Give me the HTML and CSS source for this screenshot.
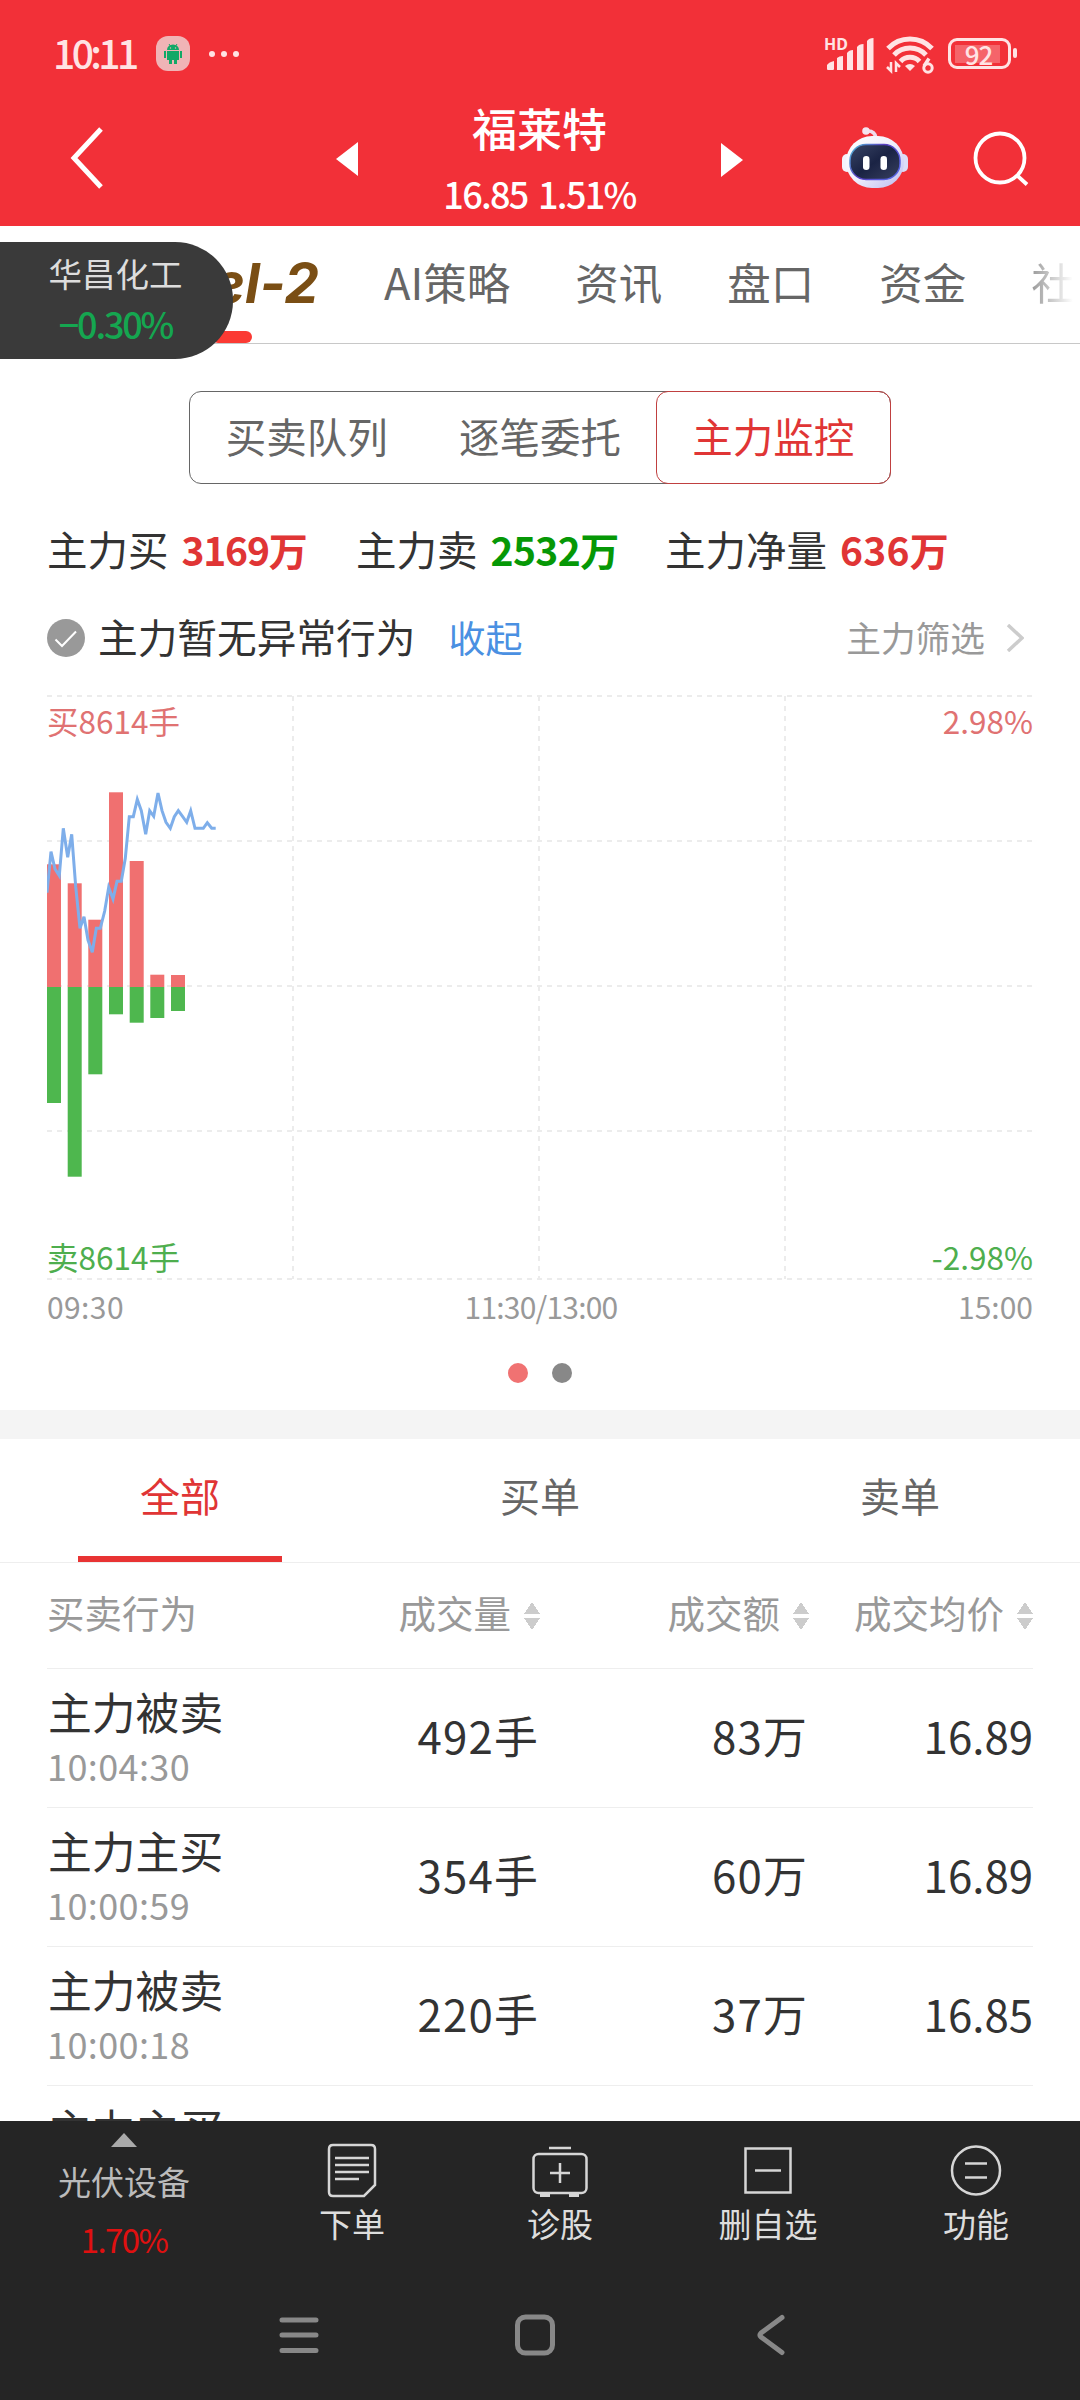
FILE: index.html
```html
<!DOCTYPE html>
<html lang="zh-CN">
<head>
  <meta charset="UTF-8">
  <meta name="viewport" content="width=device-width, initial-scale=1.0">
  <title>福莱特 主力监控</title>
  <link rel="stylesheet" href="styles.css">
</head>

<body>
  <div id="wrap">
    <!-- 顶部 -->
    <header class="top">
      <div class="status">
        <span class="time">10:11</span>
        <svg class="app" width="34" height="35" viewBox="0 0 34 35">
          <rect width="34" height="35" rx="12" fill="#f0b4b6"/>
          <path d="M11 14a6 5.5 0 0 1 12 0z" fill="#12a866"/>
          <path d="M13 8l2 3M21 8l-2 3" stroke="#12a866" stroke-width="1"/>
          <path d="M11 15h12v9h-2v4h-3v-4h-2v4h-3v-4h-2zM8 15h2v7H8zM24 15h2v7h-2z" fill="#12a866"/>
          <circle cx="14.500" cy="12" r=".7" fill="#f0b4b6"/>
          <circle cx="19.500" cy="12" r=".7" fill="#f0b4b6"/>
        </svg>
        <svg class="more" width="32" height="8" viewBox="0 0 32 8" fill="#ffe3e4">
          <circle cx="4" cy="4" r="3"/><circle cx="16" cy="4" r="3"/><circle cx="28" cy="4" r="3"/>
        </svg>
        <div class="signal">
          <span>HD</span>
          <svg width="50" height="34" viewBox="0 0 50 34" fill="#ffe3e4">
            <path d="M3 32v-4q2-3 7-4v8q0 1-1 1H4q-1 0-1-1zM13 33V21q2-2 6-2v14zM23 33V16q2-3 6-3v20zM33 33V10q2-3 6.500-3v26zM43 33V4q2-3 6.500-3v32z"/>
          </svg>
        </div>
        <svg class="wifi" width="50" height="38" viewBox="0 0 50 38" fill="none" stroke="#ffe3e4" stroke-width="5">
          <path d="M2 12.500a30 30 0 0 1 44 0"/>
          <path d="M8 19a22 22 0 0 1 32 0"/>
          <path d="M14.500 25.500a13 13 0 0 1 19 0"/>
          <path d="M24 35l-5-5q5-4 10 0z" fill="#ffe3e4" stroke="none"/>
          <path d="M5 26v9l-4-4M10 36v-9l4 4" stroke-width="2.500"/>
          <path d="M43 22.500l-5 7.500" stroke-width="3.500"/>
          <circle cx="42" cy="32" r="4.200" stroke-width="3"/>
        </svg>
        <div class="battery"><span>92</span></div>
      </div>

      <div class="bar">
        <svg class="back" width="34" height="62" viewBox="0 0 34 62" fill="none" stroke="#fff" stroke-width="5">
          <path d="M31 2L4 31l27 29"/>
        </svg>
        <svg class="prev" width="22" height="34" viewBox="0 0 22 34"><path d="M22 0v34L0 17z" fill="#fff"/></svg>
        <div class="stock">
          <h1>福莱特</h1>
          <p>16.85 1.51%</p>
        </div>
        <svg class="next" width="22" height="34" viewBox="0 0 22 34"><path d="M0 0v34l22-17z" fill="#fff"/></svg>
        <svg class="robot" width="66" height="62" viewBox="0 0 66 62">
          <defs>
            <linearGradient id="shell" x1="0" y1="0" x2="1" y2="1">
              <stop offset="0" stop-color="#fff"/><stop offset=".5" stop-color="#f0effc"/><stop offset="1" stop-color="#b9b9ee"/>
            </linearGradient>
            <linearGradient id="rim" x1="0" y1="0" x2="1" y2=".6">
              <stop offset="0" stop-color="#4fc0d8"/><stop offset=".5" stop-color="#5a3ec0"/><stop offset="1" stop-color="#5560e0"/>
            </linearGradient>
            <linearGradient id="glass" x1="0" y1="0" x2="1" y2="1">
              <stop offset="0" stop-color="#3a4566"/><stop offset=".5" stop-color="#1a2344"/><stop offset="1" stop-color="#38405f"/>
            </linearGradient>
          </defs>
          <path d="M24 5q9-1 10 7" fill="none" stroke="#f0dcec" stroke-width="3.500"/>
          <circle cx="24" cy="5" r="3.800" fill="#f5e4f0"/>
          <rect x="0" y="28" width="10" height="18" rx="5" fill="#f4f2fc"/>
          <rect x="56" y="28" width="10" height="18" rx="5" fill="#dcdcf6"/>
          <rect x="4" y="10" width="58" height="52" rx="26" fill="url(#shell)"/>
          <rect x="8" y="18.500" width="50" height="35" rx="16" fill="url(#glass)" stroke="url(#rim)" stroke-width="1.500"/>
          <rect x="21" y="30" width="6.500" height="14" rx="3.200" fill="#fff"/>
          <rect x="38.500" y="30" width="6.500" height="14" rx="3.200" fill="#fff"/>
        </svg>
        <svg class="search" width="56" height="56" viewBox="0 0 56 56" fill="none" stroke="#fff" stroke-width="3.800">
          <circle cx="27" cy="27" r="24.500"/><path d="M43.500 44l10.500 9.500"/>
        </svg>
      </div>
    </header>

    <!-- 悬浮股票 -->
    <div class="float">
      <p>华昌化工</p>
      <b>−0.30%</b>
    </div>

    <main>
      <nav class="menu">
        <span class="level on">el-2</span>
        <span>AI策略</span>
        <span>资讯</span>
        <span>盘口</span>
        <span>资金</span>
        <span class="fade">社</span>
      </nav>

      <div class="seg">
        <span>买卖队列</span>
        <span>逐笔委托</span>
        <span class="on">主力监控</span>
      </div>

      <ul class="sum">
        <li>主力买<b class="red">3169万</b></li>
        <li>主力卖<b class="green">2532万</b></li>
        <li>主力净量<b class="red">636万</b></li>
      </ul>

      <div class="notice">
        <svg width="38" height="38" viewBox="0 0 38 38">
          <circle cx="19" cy="19" r="19" fill="#999"/>
          <path d="M8.500 20.500l6.500 6.500 14-14.500" fill="none" stroke="#fff" stroke-width="2"/>
        </svg>
        <span>主力暂无异常行为</span>
        <a>收起</a>
        <em>主力筛选</em>
        <svg class="arrow" width="18" height="28" viewBox="0 0 18 28" fill="none" stroke="#ccc" stroke-width="3.500">
          <path d="M2 1l14 13L2 27"/>
        </svg>
      </div>

      <!-- 分时图 -->
      <div class="chart">
        <svg width="986" height="595" viewBox="0 0 986 595">
          <g stroke="#ececec" stroke-width="2" stroke-dasharray="5 5" fill="none">
            <path d="M0 6H986M0 151H986M0 296H986M0 441H986M0 589H986"/>
            <path d="M246 6V589M492 6V589M738 6V589"/>
          </g>
          <!-- 买 -->
          <g fill="#f07070">
            <rect x="0" y="174.300" width="14" height="122.700"/>
            <rect x="20.700" y="193.300" width="14" height="103.700"/>
            <rect x="41.300" y="229.700" width="14" height="67.300"/>
            <rect x="62" y="102.300" width="14" height="194.700"/>
            <rect x="82.700" y="171" width="14" height="126"/>
            <rect x="103.300" y="284.700" width="14" height="12.300"/>
            <rect x="124" y="285" width="14" height="12"/>
          </g>
          <!-- 卖 -->
          <g fill="#4eb74e">
            <rect x="0" y="297" width="14" height="116"/>
            <rect x="20.700" y="297" width="14" height="189.700"/>
            <rect x="41.300" y="297" width="14" height="87.300"/>
            <rect x="62" y="297" width="14" height="27.300"/>
            <rect x="82.700" y="297" width="14" height="35.700"/>
            <rect x="103.300" y="297" width="14" height="31"/>
            <rect x="124" y="297" width="14" height="24"/>
          </g>
          <polyline fill="none" stroke="#7eaeea" stroke-width="3" points="0,202.700 4,161.700 8,179 12.300,185.700 16.300,138.300 20.700,167.300 24.700,144.300 28.700,196.700 33,238.300 37,226.700 41,250 45.300,262.300 49.300,238.300 53.300,238.300 57.700,221 61.700,197.300 66,209 70,191.300 74.300,191.300 78.300,168.300 82.300,126.700 86.300,126.700 90.300,109.300 94.300,120.700 98.700,144.300 102.700,120.700 106.700,126.300 111,103 115,120.700 119,132.300 123.300,138.300 127.300,126.700 131.300,120.700 135.700,126.700 139.700,132.300 143.700,120.700 148,138.300 156.300,138.300 160.300,132.700 164.700,138.300 168.700,138.300"/>
        </svg>
        <div class="mark">
          <p class="up"><span>买8614手</span><span>2.98%</span></p>
          <p class="down"><span>卖8614手</span><span>-2.98%</span></p>
        </div>
      </div>
      <div class="axis"><span>09:30</span><span>11:30/13:00</span><span>15:00</span></div>
      <div class="dots"><i class="on"></i><i></i></div>

      <!-- 成交明细 -->
      <div class="tabs">
        <span class="on">全部</span>
        <span>买单</span>
        <span>卖单</span>
      </div>

      <div class="list">
        <div class="row head">
          <span>买卖行为</span>
          <span>成交量<i></i></span>
          <span>成交额<i></i></span>
          <span>成交均价<i></i></span>
        </div>
        <div class="row">
          <div><p>主力被卖</p><small>10:04:30</small></div>
          <span class="num">492手</span>
          <span class="num">83万</span>
          <span>16.89</span>
        </div>
        <div class="row">
          <div><p>主力主买</p><small>10:00:59</small></div>
          <span class="num">354手</span>
          <span class="num">60万</span>
          <span>16.89</span>
        </div>
        <div class="row">
          <div><p>主力被卖</p><small>10:00:18</small></div>
          <span class="num">220手</span>
          <span class="num">37万</span>
          <span>16.85</span>
        </div>
        <div class="row">
          <div><p>主力主买</p></div>
        </div>
      </div>
    </main>

    <!-- 底部 -->
    <footer>
      <div class="tools">
        <div class="sector">
          <svg width="26" height="14" viewBox="0 0 26 14"><path d="M13 0l13 14H0z" fill="#aaa"/></svg>
          <p>光伏设备</p>
          <b>1.70%</b>
        </div>
        <div>
          <svg width="60" height="56" viewBox="0 0 60 56" fill="none" stroke="#d6d6d6" stroke-width="2.500">
            <path d="M11 2h38q4 0 4 4v36L42 53H11q-4 0-4-4V6q0-4 4-4z"/>
            <path d="M13 15h34M13 22h34M13 29h34M13 36h24"/>
          </svg>
          <p>下单</p>
        </div>
        <div>
          <svg width="60" height="56" viewBox="0 0 60 56" fill="none" stroke="#d6d6d6" stroke-width="2.500">
            <rect x="3.500" y="11" width="53" height="39" rx="5"/>
            <path d="M19 5h22M30 20v20M20 30h20"/>
            <path d="M10 52h10M39 52h10" stroke-width="4"/>
          </svg>
          <p>诊股</p>
        </div>
        <div>
          <svg width="60" height="56" viewBox="0 0 60 56" fill="none" stroke="#d6d6d6" stroke-width="2.500">
            <rect x="7.500" y="5.500" width="45" height="44"/>
            <path d="M17 27.500h26"/>
          </svg>
          <p>删自选</p>
        </div>
        <div>
          <svg width="60" height="56" viewBox="0 0 60 56" fill="none" stroke="#d6d6d6" stroke-width="2.500">
            <circle cx="30" cy="27.500" r="24"/>
            <path d="M19 20.500h22M19 34.500h22"/>
          </svg>
          <p>功能</p>
        </div>
      </div>
      <div class="keys">
        <svg width="40" height="44" viewBox="0 0 40 44" stroke="#888" stroke-width="5" stroke-linecap="round">
          <path d="M3 7h34M3 22h34M3 37.500h34"/>
        </svg>
        <svg width="40" height="44" viewBox="0 0 40 44" fill="none" stroke="#888" stroke-width="5">
          <rect x="2.500" y="4" width="35" height="36" rx="8"/>
        </svg>
        <svg width="40" height="44" viewBox="0 0 40 44" fill="none" stroke="#888" stroke-width="5" stroke-linecap="round" stroke-linejoin="round">
          <path d="M31 4.500L10 20q-2 2 0 4l21 15.500"/>
        </svg>
      </div>
    </footer>
  </div>
</body>
</html>
```
FILE: styles.css
```css
html, body{
  margin: 0;
  padding: 0;
}
body{
  font-family: "Noto Sans CJK SC", sans-serif;
  color: #333;
  background-color: #fff;
}
ul, p, h1{
  margin: 0;
  padding: 0;
  list-style: none;
  font-weight: normal;
}
svg{
  display: block;
  flex-shrink: 0;
}
b, i, em{
  font-weight: normal;
  font-style: normal;
}

/* 全体 */
#wrap{
  position: relative;
  display: flex;
  flex-direction: column;
  width: 1080px;
  height: 2400px;
  overflow: hidden;
}

/* 顶部 */
.top{
  height: 226px;
  flex-shrink: 0;
  background-color: #f23038;
  color: #fff;
}
.status{
  display: flex;
  align-items: center;
  height: 107px;
  padding-left: 53px;
  color: #ffe3e4;
}
.time{
  width: 103px;
  font-size: 39px;
  font-weight: 500;
  line-height: 100px;
  margin-top: -4px;
  letter-spacing: -3.6px;
}
.more{
  margin-left: 18px;
}
.signal{
  position: relative;
  margin-left: 584px;
  margin-top: 1px;
}
.signal span{
  position: absolute;
  left: 0;
  top: -2px;
  font: bold 16px/18px "Noto Sans", sans-serif;
}
.wifi{
  margin-left: 12px;
  margin-top: 3px;
}
.battery{
  position: relative;
  box-sizing: border-box;
  width: 63px;
  height: 31px;
  margin-left: 12px;
  padding: 4px;
  border: 3px solid #ffe3e4;
  border-radius: 9px;
}
.battery span{
  display: block;
  width: 45px;
  height: 18px;
  padding-left: 2px;
  box-sizing: border-box;
  text-align: center;
  font: 500 26px/18px "Noto Sans CJK SC", sans-serif;
  letter-spacing: -1px;
  background-color: rgba(255,255,255,.25);
}
.battery::after{
  content: "";
  position: absolute;
  right: -9px;
  top: 7px;
  width: 4px;
  height: 10px;
  border-radius: 2px;
  background-color: #ffe3e4;
}

/* 标题栏 */
.bar{
  display: flex;
  align-items: flex-start;
  height: 119px;
  padding-left: 70px;
}
.back{
  margin-top: 20px;
}
.prev{
  margin: 35px 0 0 232px;
}
.next{
  margin-top: 36px;
}
.stock{
  width: 363px;
  text-align: center;
}
.stock h1{
  font-size: 45px;
  font-weight: 500;
  line-height: 60px;
  margin-top: -9px;
}
.stock p{
  font-size: 36px;
  font-weight: 500;
  line-height: 50px;
  margin-top: 10px;
  letter-spacing: -1.7px;
  word-spacing: 4px;
}
.robot{
  margin: 19px 0 0 99px;
}
.search{
  margin: 24px 0 0 65px;
}

/* 悬浮标签 */
.float{
  position: absolute;
  left: 0;
  top: 242px;
  z-index: 2;
  box-sizing: border-box;
  width: 233px;
  height: 117px;
  padding-right: 2px;
  border-radius: 0 58px 58px 0;
  background-color: #3a3a3a;
  color: #ddd;
  font-size: 33.5px;
  line-height: 50px;
  text-align: center;
}
.float p{
  padding-top: 6px;
}
.float b{
  color: #15a650;
  font-size: 36px;
  font-weight: 500;
  letter-spacing: -2.2px;
}

/* 内容 */
main{
  height: 1895px;
  overflow: hidden;
}
.menu{
  display: flex;
  gap: 65px;
  height: 117px;
  border-bottom: 1px solid #c8c8c8;
  font-size: 43.5px;
  line-height: 112px;
  color: #666;
}
.menu span{
  flex-shrink: 0;
}
.level{
  position: relative;
  width: 319px;
  text-align: right;
  font: italic 700 55px/115px Inter, sans-serif;
  color: #7a4e14;
}
.level::after{
  content: "";
  position: absolute;
  left: 212px;
  bottom: 0;
  width: 40px;
  height: 12px;
  border-radius: 6px;
  background-color: #fb3a33;
}
.fade{
  background: linear-gradient(90deg, #999, #fff 95%);
  -webkit-background-clip: text;
  background-clip: text;
  color: transparent;
}

/* 分段按钮 */
.seg{
  display: flex;
  box-sizing: border-box;
  width: 702px;
  height: 93px;
  margin: 47px auto 0;
  border: 1px solid #666;
  border-radius: 12px;
  font-size: 40.500px;
  line-height: 87px;
  color: #666;
}
.seg span{
  flex: 1;
  text-align: center;
}
.seg .on{
  margin: -1px;
  border: 1px solid #c04040;
  border-radius: 12px;
  color: #e03535;
}

/* 汇总 */
.sum{
  display: grid;
  grid-template-columns: 309px 309px auto;
  padding-left: 47px;
  margin-top: 35px;
  font-size: 40.5px;
  line-height: 60px;
}
.sum b{
  margin-left: 13px;
  font-size: 39px;
  font-weight: bold;
  letter-spacing: -.6px;
}
.sum li:first-child b{
  letter-spacing: -1.2px;
}
.sum li:last-child b{
  letter-spacing: .2px;
}
.red{
  color: #e03535;
}
.green{
  color: #069806;
}

/* 提示 */
.notice{
  display: flex;
  align-items: center;
  height: 60px;
  margin: 29px 47px 0;
}
.notice span{
  margin-left: 13px;
  font-size: 39.7px;
  line-height: 54px;
  margin-top: -4px;
}
.notice a{
  margin: -3px auto 0 33px;
  font-size: 37px;
  color: #4a90e2;
}
.notice em{
  font-size: 34.7px;
  color: #999;
  margin-top: -2px;
}
.notice .arrow{
  margin: 0 9px 0 21px;
}

/* 图表 */
.chart{
  position: relative;
  margin: 22px 47px 0;
  height: 595px;
}
.mark{
  position: absolute;
  left: 0;
  right: 0;
  top: 10px;
  bottom: 9px;
  display: flex;
  flex-direction: column;
  justify-content: space-between;
  font-size: 31.5px;
  line-height: 40px;
}
.mark p{
  display: flex;
  justify-content: space-between;
}
.up{
  color: #e07272;
}
.down{
  color: #4eae4e;
}
.axis{
  display: flex;
  justify-content: space-between;
  margin: 0 47px;
  font-size: 30px;
  line-height: 42px;
  color: #999;
}
.axis span:first-child{
  letter-spacing: .4px;
}
.axis span:nth-child(2){
  letter-spacing: -.8px;
}
.dots{
  display: flex;
  justify-content: center;
  gap: 24px;
  padding: 36px 0 27px;
}
.dots i{
  width: 20px;
  height: 20px;
  border-radius: 50%;
  background-color: #888;
}
.dots .on{
  background-color: #f07272;
}

/* 明细标签 */
.tabs{
  display: flex;
  height: 123px;
  border-top: 29px solid #f4f4f4;
  border-bottom: 1px solid #eee;
  font-size: 40px;
  line-height: 112px;
  color: #666;
}
.tabs span{
  flex: 1;
  text-align: center;
}
.tabs .on{
  box-sizing: border-box;
  height: 123px;
  flex: 0 0 204px;
  margin: 0 78px;
  border-bottom: 6px solid #e83333;
  color: #e03535;
}

/* 列表 */
.list{
  padding: 0 47px;
}
.row{
  display: grid;
  grid-template-columns: 200px 293px 269px 224px;
  box-sizing: border-box;
  height: 139px;
  border-bottom: 1px solid #eee;
  font-size: 43.8px;
  line-height: 132px;
}
.row p{
  margin-left: 1px;
  line-height: 54px;
  padding-top: 15px;
}
.row small{
  display: block;
  font-size: 36px;
  line-height: 44px;
  padding-top: 5px;
  letter-spacing: .4px;
  color: #999;
}
.row>span{
  text-align: right;
}
.row>.num{
  letter-spacing: 1.2px;
  margin-right: 1px;
}
.head{
  height: 106px;
  font-size: 37.5px;
  line-height: 98px;
  color: #999;
}
.head>span{
  display: flex;
  justify-content: flex-end;
}
.head>span:first-child{
  justify-content: flex-start;
}
/* 排序箭头 */
.head i{
  width: 16px;
  height: 28px;
  margin: 39px 0 0 13px;
  background:
    conic-gradient(from 146deg at 50% 0, #ccc 68deg, transparent 0) top / 16px 12px no-repeat,
    conic-gradient(from -34deg at 50% 100%, #ccc 68deg, transparent 0) bottom / 16px 12px no-repeat;
}

/* 底部 */
footer{
  height: 279px;
  background-color: #252525;
}
.tools{
  display: flex;
  height: 164px;
}
.tools div{
  display: flex;
  flex-direction: column;
  align-items: center;
  width: 208px;
  padding-top: 22px;
  box-sizing: border-box;
  font-size: 33px;
  line-height: 48px;
  color: #ddd;
}
.tools .sector{
  width: 248px;
  padding-top: 12px;
  color: #bbb;
}
.tools .sector p{
  margin-top: 10px;
}
.sector b{
  margin-top: 10px;
  color: #e01010;
  letter-spacing: -1.6px;
}
.keys{
  display: flex;
  justify-content: center;
  gap: 196px;
  padding: 28px 11px 0 0;
}
```
